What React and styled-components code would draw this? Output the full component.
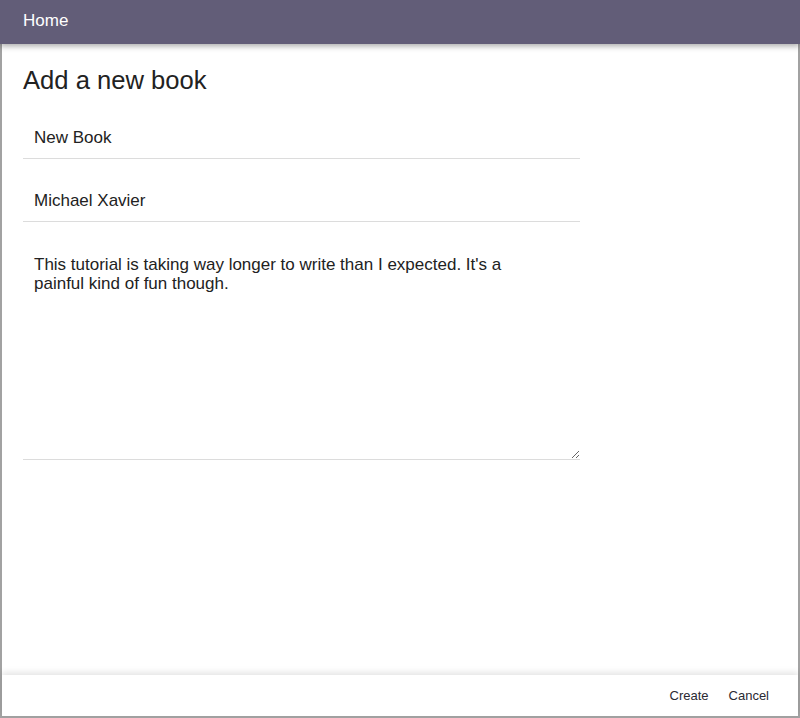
import styled, { createGlobalStyle } from "styled-components";

const GlobalStyle = createGlobalStyle`
  html, body {
    margin: 0;
    padding: 0;
    background: #ffffff;
    font-family: "Liberation Sans", Arial, sans-serif;
  }
  * {
    box-sizing: border-box;
  }
`;

const App = () => {
  return (
    <Page>
      <GlobalStyle />
      <TopBar>
        <TopBarTitle>Home</TopBarTitle>
      </TopBar>
      <Frame>
        <Content>
          <Heading>Add a new book</Heading>
          <TextInput defaultValue="New Book" />
          <TextInput defaultValue="Michael Xavier" />
          <TextArea
            defaultValue={
              "This tutorial is taking way longer to write than I expected. It's a painful kind of fun though."
            }
          />
        </Content>
        <Footer>
          <FooterButton>Create</FooterButton>
          <FooterButton>Cancel</FooterButton>
        </Footer>
      </Frame>
    </Page>
  );
};

export default App;

const Page = styled.div`
  display: flex;
  flex-direction: column;
  width: 800px;
  height: 718px;
  overflow: hidden;
`;

const TopBar = styled.header`
  position: relative;
  z-index: 2;
  display: flex;
  align-items: center;
  height: 44px;
  padding: 0 23px;
  background-color: #625d78;
  box-shadow: 0 2px 6px rgba(0, 0, 0, 0.35);
`;

const TopBarTitle = styled.span`
  color: #ffffff;
  font-size: 17px;
  margin-top: -2px;
`;

const Frame = styled.div`
  flex: 1;
  display: flex;
  flex-direction: column;
  border: 2px solid #a2a2a2;
  border-top: none;
`;

const Content = styled.main`
  flex: 1;
  display: flex;
  flex-direction: column;
  align-items: flex-start;
  padding: 0 21px;
`;

const Heading = styled.h1`
  font-size: 25.6px;
  font-weight: 400;
  color: #222222;
  line-height: 30px;
  margin: 21px 0 23px;
`;

const TextInput = styled.input`
  width: 557px;
  height: 41px;
  padding: 0 11px;
  margin-bottom: 22px;
  border: none;
  border-bottom: 1px solid #dcdcdc;
  outline: none;
  font-family: "Liberation Sans", Arial, sans-serif;
  font-size: 17px;
  color: #222222;
  background: transparent;
`;

const TextArea = styled.textarea`
  width: 557px;
  height: 216px;
  padding: 11px 30px 10px 11px;
  border: none;
  border-bottom: 1px solid #dcdcdc;
  outline: none;
  resize: vertical;
  font-family: "Liberation Sans", Arial, sans-serif;
  font-size: 17px;
  line-height: 19px;
  color: #222222;
  background: transparent;
`;

const Footer = styled.footer`
  display: flex;
  justify-content: flex-end;
  align-items: center;
  height: 41px;
  padding: 0 19px 0 0;
  box-shadow: 0 -3px 6px rgba(0, 0, 0, 0.1);
`;

const FooterButton = styled.button`
  border: none;
  background: transparent;
  padding: 0 10px;
  font-family: "Liberation Sans", Arial, sans-serif;
  font-size: 13px;
  color: #2a2a33;
  cursor: pointer;
`;
